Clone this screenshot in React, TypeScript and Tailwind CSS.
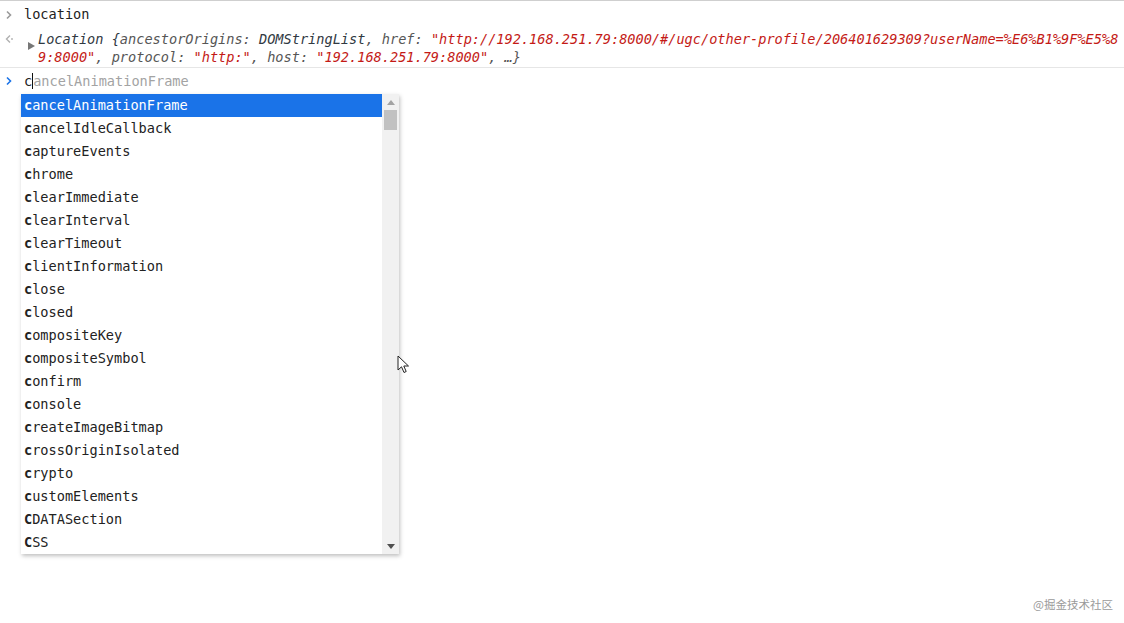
import React from 'react';

const items = [
  'cancelAnimationFrame',
  'cancelIdleCallback',
  'captureEvents',
  'chrome',
  'clearImmediate',
  'clearInterval',
  'clearTimeout',
  'clientInformation',
  'close',
  'closed',
  'compositeKey',
  'compositeSymbol',
  'confirm',
  'console',
  'createImageBitmap',
  'crossOriginIsolated',
  'crypto',
  'customElements',
  'CDATASection',
  'CSS',
];

const Chevron = ({ color }: { color: string }) => (
  <svg width="8" height="10" viewBox="0 0 8 10">
    <path d="M2 1.5 L5.5 5 L2 8.5" fill="none" stroke={color} strokeWidth="1.6" />
  </svg>
);

const BackArrow = () => (
  <svg width="10" height="10" viewBox="0 0 10 10">
    <path d="M6 1.5 L2.5 5 L6 8.5" fill="none" stroke="#b0b0b0" strokeWidth="1.4" />
    <circle cx="8" cy="5" r="0.9" fill="#b0b0b0" />
  </svg>
);

const Pointer = () => (
  <svg width="14" height="20" viewBox="0 0 14 20">
    <path
      d="M1 1 L1 15 L4.5 11.8 L7 17.5 L9.2 16.5 L6.8 11 L11.5 11 Z"
      fill="#fff"
      stroke="#222"
      strokeWidth="1"
      strokeLinejoin="round"
    />
  </svg>
);

export default function App() {
  return (
    <div className="relative w-[1124px] h-[623px] overflow-hidden bg-white font-['DejaVu_Sans_Mono',monospace] text-[13.6px] text-[#222]">
      {/* input echo */}
      <div className="flex h-[28px] items-center border-t border-[#cfcfcf]">
        <div className="flex w-[24px] justify-center pl-[1px] pr-[7px]">
          <Chevron color="#9a9a9a" />
        </div>
        <span>location</span>
      </div>

      {/* result */}
      <div className="flex border-b border-[#e6e6e6] pt-[2px] pb-[1px]">
        <div className="flex w-[24px] shrink-0 justify-center pt-[4px] pr-[6px]">
          <BackArrow />
        </div>
        <div className="flex w-[14px] shrink-0 justify-center pt-[12px]">
          <svg width="7" height="8" viewBox="0 0 7 8">
            <path d="M0 0 L7 4 L0 8 Z" fill="#777" />
          </svg>
        </div>
        <div className="min-w-0 flex-1 overflow-hidden italic leading-[18px]">
          <div className="whitespace-nowrap">
            <span className="text-[#303942]">Location </span>
            <span className="text-[#303942]">{'{'}</span>
            <span className="text-[#565656]">ancestorOrigins: </span>
            <span className="text-[#303942]">DOMStringList</span>
            <span className="text-[#565656]">, href: </span>
            <span className="text-[#c41a16]">"http://192.168.251.79:8000/#/ugc/other-profile/206401629309?userName=%E6%B1%9F%E5%8</span>
          </div>
          <div className="whitespace-nowrap">
            <span className="text-[#c41a16]">9:8000"</span>
            <span className="text-[#565656]">, protocol: </span>
            <span className="text-[#c41a16]">"http:"</span>
            <span className="text-[#565656]">, host: </span>
            <span className="text-[#c41a16]">"192.168.251.79:8000"</span>
            <span className="text-[#565656]">, …{'}'}</span>
          </div>
        </div>
      </div>

      {/* prompt */}
      <div className="flex h-[26px] items-center">
        <div className="flex w-[24px] justify-center pl-[1px] pr-[7px]">
          <Chevron color="#1a73e8" />
        </div>
        <span className="text-[#222]">c</span>
        <span className="h-[16px] w-px bg-[#111]" />
        <span className="text-[#a3a3a3]">ancelAnimationFrame</span>
      </div>

      {/* suggestion box */}
      <div className="ml-[21px] flex w-[378px] bg-white shadow-[1px_2px_4px_rgba(0,0,0,0.25)]">
        <div className="flex-1">
          {items.map((name, i) => (
            <div
              key={name}
              className={`flex h-[23px] items-center pl-[3px] whitespace-nowrap ${
                i === 0 ? 'bg-[#1a73e8] text-white' : 'text-[#222]'
              }`}
            >
              <span className="font-bold">{name[0]}</span>
              <span>{name.slice(1)}</span>
            </div>
          ))}
        </div>
        <div className="flex w-[17px] flex-col items-center bg-[#f1f1f1]">
          <div className="flex h-[16px] items-center justify-center">
            <svg width="8" height="5" viewBox="0 0 8 5">
              <path d="M0 5 L4 0 L8 5 Z" fill="#a3a3a3" />
            </svg>
          </div>
          <div className="h-[20px] w-[13px] bg-[#c1c1c1]" />
          <div className="flex-1" />
          <div className="flex h-[16px] items-center justify-center">
            <svg width="8" height="5" viewBox="0 0 8 5">
              <path d="M0 0 L8 0 L4 5 Z" fill="#505050" />
            </svg>
          </div>
        </div>
      </div>

      <div className="absolute left-[397px] top-[355px]">
        <Pointer />
      </div>

      <div className="absolute right-[11px] bottom-[10px] font-['Noto_Sans_CJK_SC',sans-serif] text-[11.5px] text-[#9a9a9a]">
        @掘金技术社区
      </div>
    </div>
  );
}
